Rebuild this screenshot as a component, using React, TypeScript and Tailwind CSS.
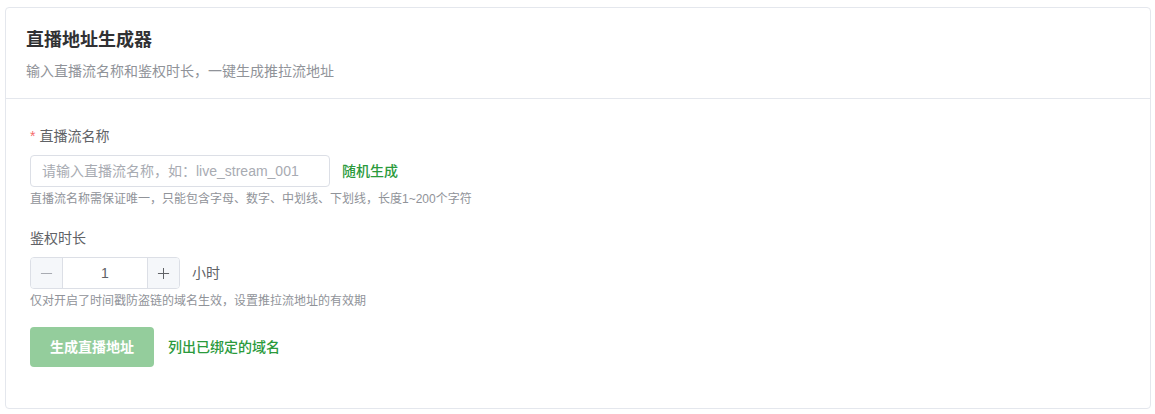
import { useState } from "react";

const font = "font-['Liberation_Sans','Noto_Sans_CJK_SC',sans-serif]";

const StreamUrlGenerator = () => {
  const [streamName, setStreamName] = useState("");
  const [hours, setHours] = useState(1);

  return (
    <div className={`min-h-screen bg-white pt-[7px] pl-[5px] pr-[5px] ${font}`}>
      <div className="w-[1146px] rounded-[4px] border border-[#e4e7ed] bg-white">
        {/* Header */}
        <div className="border-b border-[#e4e7ed] px-[20px] pt-[20px] pb-[16px]">
          <h2 className="text-[18px] leading-[24px] font-bold text-[#303133]">直播地址生成器</h2>
          <p className="mt-[8px] text-[14px] leading-[22px] text-[#909399]">
            输入直播流名称和鉴权时长，一键生成推拉流地址
          </p>
        </div>

        {/* Form */}
        <div className="px-[24px] pt-[26px] pb-[41px]">
          {/* Stream name */}
          <div className="mb-[18px]">
            <label className="mb-[8px] flex h-[22px] items-center text-[14px] text-[#606266]">
              <span className="mr-[4px] text-[#f56c6c]">*</span>
              直播流名称
            </label>
            <div className="flex items-center gap-[12px]">
              <input
                value={streamName}
                onChange={(e) => setStreamName(e.target.value)}
                placeholder="请输入直播流名称，如：live_stream_001"
                className="h-[32px] w-[300px] rounded-[4px] border border-[#dcdfe6] px-[11px] text-[14px] text-[#606266] outline-none placeholder:text-[#a8abb2]"
              />
              <button
                type="button"
                onClick={() => setStreamName("live_stream_" + Math.floor(Math.random() * 1000))}
                className="text-[14px] font-medium text-[#2b9a3c]"
              >
                随机生成
              </button>
            </div>
            <p className="mt-[2px] text-[12px] leading-[20px] text-[#909399]">
              直播流名称需保证唯一，只能包含字母、数字、中划线、下划线，长度1~200个字符
            </p>
          </div>

          {/* Auth duration */}
          <div>
            <label className="mb-[8px] flex h-[22px] items-center text-[14px] text-[#606266]">鉴权时长</label>
            <div className="flex items-center gap-[12px]">
              <div className="flex h-[32px] w-[150px] overflow-hidden rounded-[4px] border border-[#dcdfe6]">
                <button
                  type="button"
                  onClick={() => setHours((h) => Math.max(1, h - 1))}
                  className="flex w-[32px] items-center justify-center border-r border-[#dcdfe6] bg-[#f5f7fa] text-[#a8abb2]"
                >
                  <svg width="13" height="13" viewBox="0 0 14 14">
                    <path d="M1 7h12" stroke="currentColor" strokeWidth="1.1" />
                  </svg>
                </button>
                <input
                  value={hours}
                  onChange={(e) => setHours(Number(e.target.value) || 1)}
                  className="w-0 flex-1 text-center text-[14px] text-[#606266] outline-none"
                />
                <button
                  type="button"
                  onClick={() => setHours((h) => h + 1)}
                  className="flex w-[32px] items-center justify-center border-l border-[#dcdfe6] bg-[#f5f7fa] text-[#606266]"
                >
                  <svg width="13" height="13" viewBox="0 0 14 14">
                    <path d="M1 7h12M7 1v12" stroke="currentColor" strokeWidth="1.1" />
                  </svg>
                </button>
              </div>
              <span className="text-[14px] text-[#606266]">小时</span>
            </div>
            <p className="mt-[2px] text-[12px] leading-[20px] text-[#909399]">
              仅对开启了时间戳防盗链的域名生效，设置推拉流地址的有效期
            </p>
          </div>

          {/* Actions */}
          <div className="mt-[16px] flex items-center gap-[14px]">
            <button
              type="button"
              disabled={!streamName}
              className="h-[40px] w-[124px] rounded-[4px] bg-[#94cd9c] text-[14px] font-bold text-white"
            >
              生成直播地址
            </button>
            <button type="button" className="text-[14px] font-medium text-[#2b9a3c]">
              列出已绑定的域名
            </button>
          </div>
        </div>
      </div>
    </div>
  );
};

export default function App() {
  return <StreamUrlGenerator />;
}
